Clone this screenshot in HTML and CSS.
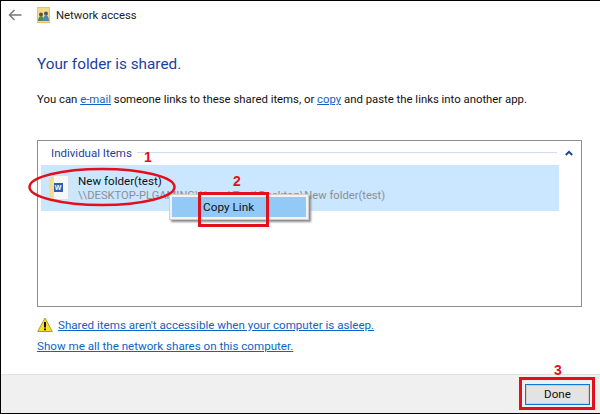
FILE: index.html
```html
<!DOCTYPE html>
<html lang="en">
<head>
<meta charset="utf-8">
<title>Network access</title>
<link rel="stylesheet" href="styles.css">
</head>
<body>
<div class="window">
  <header class="titlebar">
    <svg class="back" width="14" height="12" viewBox="0 0 14 12"><path d="M6.500 1 1.500 6l5 5M1.500 6H13.500" fill="none" stroke="#7a7a7a" stroke-width="1.500"/></svg>
    <svg class="netico" width="13" height="16" viewBox="0 0 13 16">
      <rect x="0.500" y="0.500" width="12" height="15" fill="#f3d98a" stroke="#e5c566"/>
      <circle cx="4" cy="7.500" r="2" fill="#5d5140"/><circle cx="9" cy="6.500" r="2" fill="#4d5a66"/>
      <path d="M1 14c0-3 1.500-5 3-5s3 2 3 5z" fill="#4f8a5c"/><path d="M6 14c0-3 1.500-6 3-6s3 3 3 6z" fill="#4b86b8"/>
    </svg>
    <span class="wintitle">Network access</span>
  </header>
  <main class="content">
    <h1 class="heading">Your folder is shared.</h1>
    <p class="intro">You can <a href="#">e-mail</a> someone links to these shared items, or <a href="#">copy</a> and paste the links into another app.</p>
    <section class="items">
      <div class="group-head">
        <span class="group-title">Individual Items</span>
        <span class="group-rule"></span>
        <svg class="chev" width="8" height="6" viewBox="0 0 8 6"><path d="M.8 5 4 1.800 7.200 5" fill="none" stroke="#1b3f94" stroke-width="1.800"/></svg>
      </div>
      <div class="row">
        <svg class="fileico" width="20" height="25" viewBox="0 0 20 25">
          <path d="M0 3 5 1v23l-5-2z" fill="#f4dc8e"/>
          <rect x="4.500" y="0.500" width="15" height="24" fill="#f7f8fa" stroke="#dcdfe3"/>
          <rect x="5" y="8" width="9" height="9" fill="#2b5fb3"/>
          <text class="w" x="5.800" y="15">W</text>
        </svg>
        <div class="rowtext">
          <div class="rowname">New folder(test)</div>
          <div class="rowpath">\\DESKTOP-PLGAMING\Users\Test\Desktop\New folder(test)</div>
        </div>
      </div>
    </section>
    <div class="links">
      <div class="link-row">
        <svg width="16" height="16" viewBox="0 0 16 16"><path d="M8 1 15.300 14.500H.7z" fill="#fbdf2c" stroke="#a89a3c"/><path d="M8 5v5.500M8 11.500v1.800" stroke="#111" stroke-width="2"/></svg>
        <a href="#">Shared items aren't accessible when your computer is asleep.</a>
      </div>
      <a href="#">Show me all the network shares on this computer.</a>
    </div>
  </main>
  <footer class="footer">
    <button class="done">Done</button>
  </footer>

  <div class="menu"><div class="menu-item">Copy Link</div></div>

  <svg class="oval" width="150" height="40" viewBox="0 0 150 40"><ellipse cx="74" cy="20" rx="72.500" ry="18" fill="none" stroke="#e2101c" stroke-width="2.500"/></svg>
  <span class="mark mark-1">1</span>
  <span class="mark mark-2">2</span>
  <span class="mark mark-3">3</span>
  <div class="box box-2"></div>
  <div class="box box-3"></div>
</div>
</body>
</html>
```
FILE: styles.css
```css
* { box-sizing: border-box; }
html, body { margin: 0; padding: 0; }
body { width: 600px; height: 414px; background: #fff; font-family: Roboto, "Open Sans", sans-serif; font-size: 11.6px; color: #111; }
.window { position: relative; width: 600px; height: 414px; border: 1px solid #000; border-right: 0; display: flex; flex-direction: column; background: #fff; overflow: hidden; }
a { color: #0f63c4; text-decoration: underline; }
.titlebar { display: flex; align-items: center; height: 28px; padding-left: 7px; }
.back { margin-right: 15px; }
.netico { margin-right: 6px; }
.wintitle { font-size: 11.300px; color: #222; }
.content { flex: 1; display: flex; flex-direction: column; padding: 0 0 0 36px; }
.heading { margin: 24px 0 0; font-size: 15.300px; font-weight: 400; color: #1c3f9e; line-height: 22px; }
.intro { margin: 16px 0 0; font-size: 11.350px; line-height: 16px; white-space: nowrap; }
.items { width: 545px; height: 167px; margin-top: 33px; border: 1px solid #8e8e8e; padding: 0 0 0 3px; }
.group-head { display: flex; align-items: center; height: 23px; padding-right: 8px; }
.group-title { color: #1c3f9e; font-size: 11.500px; margin: 0 0 0 10px; }
.group-rule { flex: 1; height: 1px; background: #cfdcee; margin: 0 8px 0 5px; }
.row { display: flex; width: 518px; height: 46px; margin: 1px 0 0 0; padding: 9px 0 0 8px; background: #cbe6ff; }
.fileico { margin-right: 9px; margin-top: 1px; }
.w { font: 700 7px "Liberation Sans", sans-serif; fill: #fff; }
.rowname { font-size: 11.600px; line-height: 14px; color: #111; }
.rowpath { font-size: 11.200px; line-height: 16px; color: #8b8f94; white-space: nowrap; }
.links { margin: 10px 0 0; display: flex; flex-direction: column; gap: 5px; line-height: 16px; }
.link-row { display: flex; align-items: center; gap: 5px; }
.footer { height: 39px; display: flex; justify-content: flex-end; align-items: center; padding: 0 10px 0 0; background: #f0f0f0; border-top: 1px solid #e2e2e2; }
.done { width: 65px; height: 21px; padding: 0; font: inherit; color: #111; background: #e3e3e3; border: 1px solid #0a78d7; box-shadow: inset 0 0 0 1px #cfcfcf; }
.menu { position: absolute; left: 168px; top: 193px; width: 140px; height: 26px; padding: 2px; background: #f2f2f2; border: 1px solid #cfcfcf; box-shadow: 2px 2px 2px #8b8b8b; }
.menu-item { height: 20px; padding-left: 31px; background: #92c9f7; line-height: 20px; font-size: 11.800px; color: #111; }
.oval { position: absolute; left: 27px; top: 166px; }
.mark { position: absolute; font: 700 14px "Liberation Sans", sans-serif; color: #e2101c; line-height: 14px; }
.mark-1 { left: 143px; top: 149px; }
.mark-2 { left: 232px; top: 173px; }
.mark-3 { left: 553px; top: 362px; }
.box { position: absolute; border: 3px solid #e2101c; }
.box-2 { left: 197px; top: 191px; width: 71px; height: 35px; }
.box-3 { left: 518px; top: 376px; width: 76px; height: 33px; }
```
